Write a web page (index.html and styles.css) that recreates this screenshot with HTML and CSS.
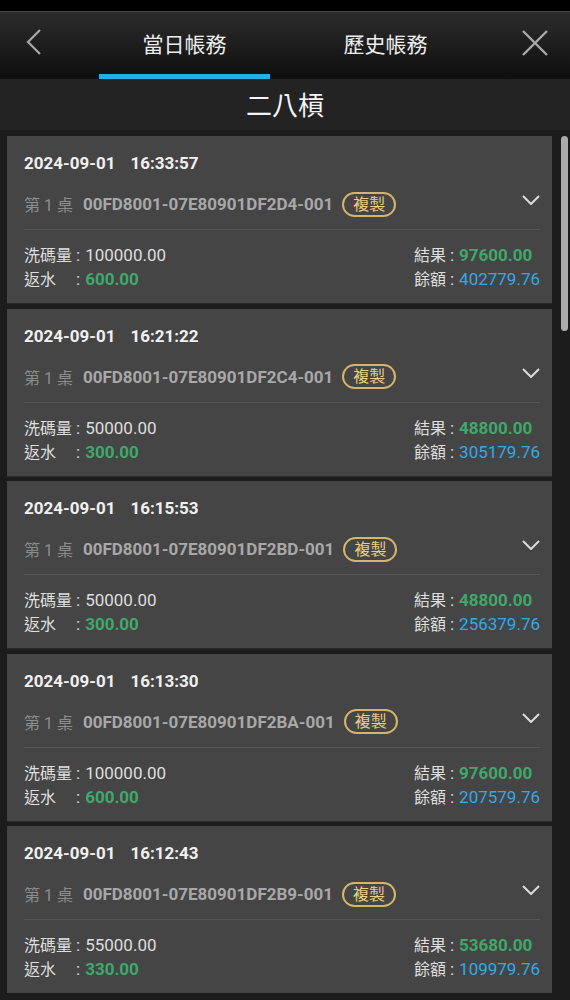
FILE: index.html
```html
<!DOCTYPE html>
<html lang="zh-Hant">
<head>
  <meta charset="UTF-8" />
  <meta name="viewport" content="width=device-width, initial-scale=1.0" />
  <title>當日帳務</title>
  <link rel="stylesheet" href="styles.css">
</head>
<body>
  <div class="statusbar"></div>
  <header class="topbar">
    <button class="icon-btn back" aria-label="返回">
      <svg width="18" height="26" viewBox="0 0 18 26"><path d="M15 1 L3 13 L15 25" fill="none" stroke="#a8a8a8" stroke-width="2.2"/></svg>
    </button>
    <nav class="tabs">
      <div class="tab active">當日帳務</div>
      <div class="tab">歷史帳務</div>
    </nav>
    <button class="icon-btn close" aria-label="關閉">
      <svg width="28" height="28" viewBox="0 0 28 28"><path d="M2 2 L26 26 M26 2 L2 26" fill="none" stroke="#a8a8a8" stroke-width="2.4"/></svg>
    </button>
  </header>
  <div class="title">二八槓</div>

  <main class="list" id="list"></main>
  <div class="scrollbar"></div>

  <script>
    // Records for today
    const records = [
      { date: "2024-09-01", time: "16:33:57", id: "00FD8001-07E80901DF2D4-001", wash: "100000.00", rebate: "600.00", result: "97600.00", balance: "402779.76" },
      { date: "2024-09-01", time: "16:21:22", id: "00FD8001-07E80901DF2C4-001", wash: "50000.00", rebate: "300.00", result: "48800.00", balance: "305179.76" },
      { date: "2024-09-01", time: "16:15:53", id: "00FD8001-07E80901DF2BD-001", wash: "50000.00", rebate: "300.00", result: "48800.00", balance: "256379.76" },
      { date: "2024-09-01", time: "16:13:30", id: "00FD8001-07E80901DF2BA-001", wash: "100000.00", rebate: "600.00", result: "97600.00", balance: "207579.76" },
      { date: "2024-09-01", time: "16:12:43", id: "00FD8001-07E80901DF2B9-001", wash: "55000.00", rebate: "330.00", result: "53680.00", balance: "109979.76" }
    ];

    const chevron = '<svg width="18" height="10" viewBox="0 0 18 10"><path d="M1 1 L9 9 L17 1" fill="none" stroke="#dcdcdc" stroke-width="2"/></svg>';

    document.getElementById("list").innerHTML = records.map(r => `
      <section class="card">
        <div class="card-top">
          <div class="datetime"><span>${r.date}</span><span class="time">${r.time}</span></div>
          <div class="round">
            <span class="table">第 1 桌</span>
            <span class="round-id">${r.id}</span>
            <span class="copy">複製</span>
            <span class="chevron">${chevron}</span>
          </div>
        </div>
        <div class="card-bottom">
          <div class="col">
            <div class="line"><span class="label">洗碼量</span><span class="colon">:</span><span class="val">${r.wash}</span></div>
            <div class="line"><span class="label">返水</span><span class="colon">:</span><span class="val green">${r.rebate}</span></div>
          </div>
          <div class="col">
            <div class="line"><span class="label">結果</span><span class="colon">:</span><span class="val green">${r.result}</span></div>
            <div class="line"><span class="label">餘額</span><span class="colon">:</span><span class="val blue">${r.balance}</span></div>
          </div>
        </div>
      </section>`).join("");
  </script>
</body>
</html>
```

FILE: styles.css
```css
body {
  margin: 0;
  background-color: #1c1c1c;
  color: #e6e6e6;
  font-family: Roboto, "Noto Sans CJK TC", sans-serif;
  overflow: hidden;
}
.statusbar {
  height: 11px;
  background-color: #000;
}
/* Header with tabs */
.topbar {
  height: 68px;
  border-top: 1px solid #444;
  box-sizing: border-box;
  background: linear-gradient(#2c2c2c, #0e0e0e);
  display: flex;
  align-items: stretch;
}
.icon-btn {
  background: none;
  border: none;
  padding: 0;
  width: 85px;
  display: flex;
  align-items: flex-start;
  padding-top: 17px;
}
.back {
  padding-left: 25px;
}
.close {
  justify-content: flex-end;
  padding-right: 21px;
}
.tabs {
  flex: 1;
  display: flex;
  justify-content: center;
  gap: 30px;
}
.tab {
  width: 171px;
  box-sizing: border-box;
  text-align: center;
  font-size: 21px;
  color: #ededed;
  padding-top: 16px;
  border-bottom: 5px solid transparent;
}
.tab.active {
  border-bottom-color: #1fb3e2;
}
.title {
  height: 51px;
  background-color: #232323;
  text-align: center;
  font-size: 26px;
  line-height: 55px;
  color: #f4f4f4;
}
/* Record list */
.list {
  padding: 6px 18px 0 7px;
  display: flex;
  flex-direction: column;
  gap: 5.5px;
}
.card {
  background-color: #454545;
  padding: 0 12px 0 17px;
  box-shadow: 0 1px 0 #2a2a2a;
}
.card-top {
  padding: 15px 0 13px;
}
.datetime {
  font-size: 17px;
  font-weight: bold;
  line-height: 24px;
  color: #f0f0f0;
}
.time {
  margin-left: 15px;
}
.round {
  margin-top: 17px;
  height: 24px;
  display: flex;
  align-items: center;
  font-size: 16px;
}
.table {
  color: #8c8c8c;
  margin-right: 10px;
  word-spacing: 0;
}
.round-id {
  color: #a8a8a8;
  font-weight: bold;
  font-size: 17px;
}
.copy {
  margin-left: 9px;
  height: 25px;
  box-sizing: border-box;
  padding: 0 9px;
  border: 2px solid #d6b469;
  border-radius: 13px;
  color: #ebcd85;
  font-size: 16px;
  line-height: 21px;
}
.chevron {
  margin-left: auto;
  display: flex;
  margin-bottom: 8px;
}
.card-bottom {
  border-top: 1px solid #575757;
  padding: 13px 0 12px;
  display: flex;
  justify-content: space-between;
  font-size: 17px;
  color: #dedede;
}
.line {
  height: 24px;
  line-height: 24px;
  white-space: nowrap;
  display: flex;
  align-items: baseline;
}
.label {
  display: inline-block;
  font-size: 16px;
}
.col:first-child .label {
  width: 48px;
}
.colon {
  margin: 0 5px 0 4px;
}
.green {
  color: #3fa86b;
  font-weight: bold;
}
.blue {
  color: #34a9e6;
}
.scrollbar {
  position: absolute;
  top: 136px;
  right: 2px;
  width: 7px;
  height: 195px;
  border-radius: 4px;
  background-color: #ababab;
}
```
